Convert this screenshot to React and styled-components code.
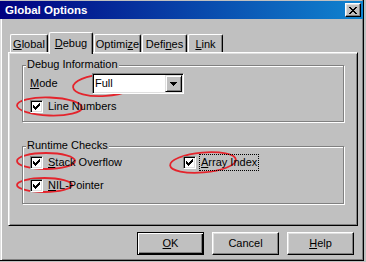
import React from 'react';
import styled, { createGlobalStyle, css } from 'styled-components';

const FONT = `"Liberation Sans", Arial, sans-serif`;

const GlobalStyle = createGlobalStyle`
  html, body { margin: 0; padding: 0; background: #c0c0c0; }
  body { font-family: ${FONT}; font-size: 11px; line-height: 13px; color: #000; }
  * { box-sizing: border-box; }
  u { text-decoration-thickness: 1px; text-underline-offset: 1px; }
`;

const Screen = styled.div`
  position: relative;
  width: 366px;
  height: 262px;
  overflow: hidden;
  background: #c0c0c0;
`;

const Window = styled.div`
  width: 364px;
  height: 261px;
  display: flex;
  flex-direction: column;
  padding-top: 1px;
  background: #c0c0c0;
  border-right: 1px solid #000;
  border-bottom: 1px solid #000;
  box-shadow: inset -1px -1px 0 #808080;
`;

const TitleBar = styled.div`
  flex: none;
  height: 18px;
  display: flex;
  align-items: center;
  justify-content: space-between;
  padding: 0 2px 0 5px;
  background: linear-gradient(to right, #000080, #1084d0);
  color: #fff;
  font-weight: bold;
  font-size: 11.5px;
`;

const CloseButton = styled.span`
  width: 16px;
  height: 14px;
  display: flex;
  align-items: center;
  justify-content: center;
  background: #c0c0c0;
  border: 1px solid;
  border-color: #fff #000 #000 #fff;
  box-shadow: inset -1px -1px 0 #808080, inset 1px 1px 0 #dfdfdf;
`;

const Body = styled.div`
  flex: 1;
  display: flex;
  flex-direction: column;
  padding: 13px 5px 0 8px;
  box-shadow: inset 1px 0 0 #dfdfdf, inset 2px 0 0 #fff;
`;

const TabStrip = styled.div`
  height: 20px;
  display: flex;
  align-items: flex-end;
  gap: 1px;
  padding-left: 2px;
`;

const Tab = styled.div`
  position: relative;
  width: ${p => p.$w}px;
  height: ${p => (p.$active ? 22 : 18)}px;
  margin-bottom: ${p => (p.$active ? -2 : 0)}px;
  z-index: ${p => (p.$active ? 2 : 0)};
  padding-top: ${p => (p.$active ? 4 : 3)}px;
  display: flex;
  justify-content: center;
  background: #c0c0c0;
  border-top: 1px solid #fff;
  border-left: 1px solid #fff;
  border-right: 1px solid #000;
  border-radius: 2px 2px 0 0;
  box-shadow: inset -1px 0 0 #808080;
  white-space: nowrap;
`;

const Panel = styled.div`
  position: relative;
  z-index: 1;
  height: 174px;
  display: flex;
  flex-direction: column;
  gap: 24px;
  padding: 12px 12px 0 13px;
  border: 1px solid;
  border-color: #fff #000 #000 #fff;
  box-shadow: inset 1px 1px 0 #dfdfdf, inset -1px -1px 0 #808080;
`;

const Group = styled.div`
  position: relative;
  width: 322px;
  border: 1px solid #808080;
  box-shadow: inset 1px 1px 0 #fff, 1px 1px 0 #fff;
  padding: ${p => p.$pad};
`;

const Legend = styled.span`
  position: absolute;
  top: -8px;
  left: 3px;
  padding: 0 1px;
  background: #c0c0c0;
  white-space: nowrap;
`;

const Stack = styled.div`
  display: flex;
  flex-direction: column;
  gap: 6px;
`;

const FieldRow = styled.div`
  display: flex;
  align-items: center;
  height: 21px;
`;

const FieldLabel = styled.span`
  width: 62px;
`;

const Combo = styled.div`
  width: 92px;
  height: 21px;
  display: flex;
  padding: 1px;
  background: #fff;
  border: 1px solid;
  border-color: #808080 #fff #fff #808080;
  box-shadow: inset 1px 1px 0 #000, inset -1px -1px 0 #dfdfdf;
`;

const ComboValue = styled.span`
  flex: 1;
  padding-left: 1px;
  line-height: 17px;
`;

const DropButton = styled.span`
  width: 17px;
  height: 17px;
  display: flex;
  align-items: center;
  justify-content: center;
  background: #c0c0c0;
  border: 1px solid;
  border-color: #dfdfdf #000 #000 #dfdfdf;
  box-shadow: inset 1px 1px 0 #fff, inset -1px -1px 0 #808080;
`;

const CheckGrid = styled.div`
  display: grid;
  grid-template-columns: 153px auto;
  row-gap: 10px;
`;

const CheckRow = styled.label`
  display: flex;
  align-items: center;
  gap: 5px;
  height: 13px;
  white-space: nowrap;
`;

const Box = styled.span`
  flex: none;
  width: 13px;
  height: 13px;
  display: flex;
  align-items: center;
  justify-content: center;
  background: #fff;
  border: 1px solid;
  border-color: #808080 #fff #fff #808080;
  box-shadow: inset 1px 1px 0 #000, inset -1px -1px 0 #dfdfdf;
`;

const Focus = styled.span`
  margin-left: -1px;
  padding: 1px;
  outline: 1px dotted #000;
`;

const ButtonRow = styled.div`
  display: flex;
  justify-content: flex-end;
  gap: 8px;
  margin-top: 6px;
  padding-right: 4px;
`;

const Button = styled.button`
  width: 67px;
  height: 23px;
  padding: 0;
  font: 11px/13px ${FONT};
  color: #000;
  background: #c0c0c0;
  border: 1px solid;
  border-color: #fff #000 #000 #fff;
  box-shadow: inset -1px -1px 0 #808080, inset 1px 1px 0 #dfdfdf;
  ${p =>
    p.$default &&
    css`
      border: 1px solid #000;
      box-shadow: inset 1px 1px 0 #fff, inset -1px -1px 0 #000, inset -2px -2px 0 #808080;
    `}
`;

const Annotations = styled.svg`
  position: absolute;
  left: 0;
  top: 0;
  pointer-events: none;
`;

const Check = () => (
  <svg width="7" height="7" viewBox="0 0 7 7">
    <path
      fill="#000"
      d="M6 0h1v1h-1z M5 1h2v1h-2z M0 2h1v1h-1z M4 2h3v1h-3z M0 3h2v1h-2z M3 3h3v1h-3z M0 4h5v1h-5z M1 5h3v1h-3z M2 6h1v1h-1z"
    />
  </svg>
);

const CloseGlyph = () => (
  <svg width="8" height="7" viewBox="0 0 8 7">
    <path
      fill="#000"
      d="M0 0h2v1h-2z M6 0h2v1h-2z M1 1h2v1h-2z M5 1h2v1h-2z M2 2h4v1h-4z M3 3h2v1h-2z M2 4h4v1h-4z M1 5h2v1h-2z M5 5h2v1h-2z M0 6h2v1h-2z M6 6h2v1h-2z"
    />
  </svg>
);

const Arrow = () => (
  <svg width="7" height="4" viewBox="0 0 7 4">
    <path fill="#000" d="M0 0h7v1h-7z M1 1h5v1h-5z M2 2h3v1h-3z M3 3h1v1h-1z" />
  </svg>
);

const CheckBox = ({ children, focus }) => (
  <CheckRow>
    <Box>
      <Check />
    </Box>
    {focus ? <Focus>{children}</Focus> : <span>{children}</span>}
  </CheckRow>
);

const tabs = [
  { key: 'g', w: 38, label: <><u>G</u>lobal</> },
  { key: 'd', w: 44, label: <><u>D</u>ebug</>, active: true },
  { key: 'o', w: 47, label: <>Optimi<u>z</u>e</> },
  { key: 'f', w: 45, label: <>Defi<u>n</u>es</> },
  { key: 'l', w: 35, label: <><u>L</u>ink</> },
];

const marks = [
  { cx: 105, cy: 85, rx: 32, ry: 11, r: -4 },
  { cx: 49.5, cy: 106.5, rx: 32.5, ry: 9, r: 2 },
  { cx: 46, cy: 161, rx: 29, ry: 8, r: 0 },
  { cx: 44.5, cy: 185, rx: 27.5, ry: 7, r: 0 },
  { cx: 203, cy: 162.5, rx: 33, ry: 10, r: -5 },
];

export default function App() {
  return (
    <Screen>
      <GlobalStyle />
      <Window>
        <TitleBar>
          <span>Global Options</span>
          <CloseButton>
            <CloseGlyph />
          </CloseButton>
        </TitleBar>
        <Body>
          <TabStrip>
            {tabs.map(t => (
              <Tab key={t.key} $w={t.w} $active={t.active}>
                {t.label}
              </Tab>
            ))}
          </TabStrip>
          <Panel>
            <Group $pad="7px 0 8px 7px">
              <Legend>Debug Information</Legend>
              <Stack>
                <FieldRow>
                  <FieldLabel>
                    <u>M</u>ode
                  </FieldLabel>
                  <Combo>
                    <ComboValue>Full</ComboValue>
                    <DropButton>
                      <Arrow />
                    </DropButton>
                  </Combo>
                </FieldRow>
                <CheckBox>Line Numbers</CheckBox>
              </Stack>
            </Group>
            <Group $pad="9px 0 11px 7px">
              <Legend>Runtime Checks</Legend>
              <CheckGrid>
                <CheckBox>
                  <u>S</u>tack Overflow
                </CheckBox>
                <CheckBox focus>
                  <u>A</u>rray Index
                </CheckBox>
                <CheckBox>
                  <u>N</u>IL-Pointer
                </CheckBox>
              </CheckGrid>
            </Group>
          </Panel>
          <ButtonRow>
            <Button $default>
              <u>O</u>K
            </Button>
            <Button>Cancel</Button>
            <Button>
              <u>H</u>elp
            </Button>
          </ButtonRow>
        </Body>
      </Window>
      <Annotations width="366" height="262" viewBox="0 0 366 262">
        {marks.map((m, i) => (
          <ellipse
            key={i}
            cx={m.cx}
            cy={m.cy}
            rx={m.rx}
            ry={m.ry}
            transform={`rotate(${m.r} ${m.cx} ${m.cy})`}
            fill="none"
            stroke="#e4242c"
            strokeWidth="1.8"
          />
        ))}
      </Annotations>
    </Screen>
  );
}
